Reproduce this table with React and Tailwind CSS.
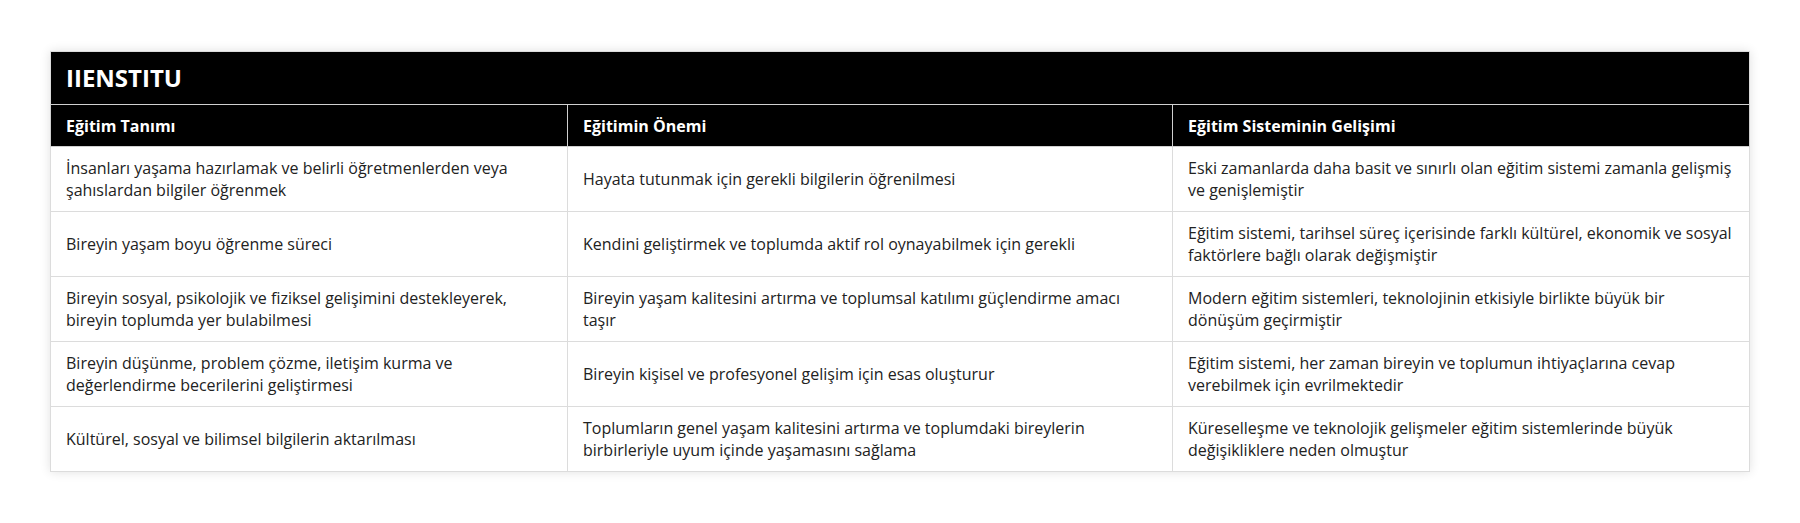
const rows = [
  [
    'İnsanları yaşama hazırlamak ve belirli öğretmenlerden veya şahıslardan bilgiler öğrenmek',
    'Hayata tutunmak için gerekli bilgilerin öğrenilmesi',
    'Eski zamanlarda daha basit ve sınırlı olan eğitim sistemi zamanla gelişmiş ve genişlemiştir',
  ],
  [
    'Bireyin yaşam boyu öğrenme süreci',
    'Kendini geliştirmek ve toplumda aktif rol oynayabilmek için gerekli',
    'Eğitim sistemi, tarihsel süreç içerisinde farklı kültürel, ekonomik ve sosyal faktörlere bağlı olarak değişmiştir',
  ],
  [
    'Bireyin sosyal, psikolojik ve fiziksel gelişimini destekleyerek, bireyin toplumda yer bulabilmesi',
    'Bireyin yaşam kalitesini artırma ve toplumsal katılımı güçlendirme amacı taşır',
    'Modern eğitim sistemleri, teknolojinin etkisiyle birlikte büyük bir dönüşüm geçirmiştir',
  ],
  [
    'Bireyin düşünme, problem çözme, iletişim kurma ve değerlendirme becerilerini geliştirmesi',
    'Bireyin kişisel ve profesyonel gelişim için esas oluşturur',
    'Eğitim sistemi, her zaman bireyin ve toplumun ihtiyaçlarına cevap verebilmek için evrilmektedir',
  ],
  [
    'Kültürel, sosyal ve bilimsel bilgilerin aktarılması',
    'Toplumların genel yaşam kalitesini artırma ve toplumdaki bireylerin birbirleriyle uyum içinde yaşamasını sağlama',
    'Küreselleşme ve teknolojik gelişmeler eğitim sistemlerinde büyük değişikliklere neden olmuştur',
  ],
];

const headers = ['Eğitim Tanımı', 'Eğitimin Önemi', 'Eğitim Sisteminin Gelişimi'];

// the middle column wraps a touch earlier in the original
const pad = ['pr-[15px]', 'pr-[18px]', 'pr-[15px]'];

export default function App() {
  return (
    <div className="min-h-[523px] bg-white px-[50px] pt-[51px] font-['Open_Sans',sans-serif] text-[#222]">
      <div className="shadow-[0_0_10px_rgba(0,0,0,0.12)]">
        <table className="w-full table-fixed border-collapse border border-[#dcdcdc]">
          <colgroup>
            <col className="w-[517px]" />
            <col className="w-[605px]" />
            <col />
          </colgroup>
          <thead>
            <tr className="bg-black">
              <th colSpan={3} className="px-[15px] py-[8px] text-left text-[24px] font-bold leading-[36px] text-white">
                IIENSTITU
              </th>
            </tr>
            <tr className="bg-black">
              {headers.map((h, j) => (
                <th
                  key={h}
                  className={`border border-[#d0d0d0] py-[9.5px] pl-[15px] ${pad[j]} text-left text-[16px] font-bold leading-[22px] text-white`}
                >
                  {h}
                </th>
              ))}
            </tr>
          </thead>
          <tbody>
            {rows.map((row, i) => (
              <tr key={i} className="h-[65px]">
                {row.map((cell, j) => (
                  <td
                    key={j}
                    className={`border border-[#dcdcdc] py-[9px] pl-[15px] ${pad[j]} align-middle text-[16px] leading-[22.5px]`}
                  >
                    {cell}
                  </td>
                ))}
              </tr>
            ))}
          </tbody>
        </table>
      </div>
    </div>
  );
}
